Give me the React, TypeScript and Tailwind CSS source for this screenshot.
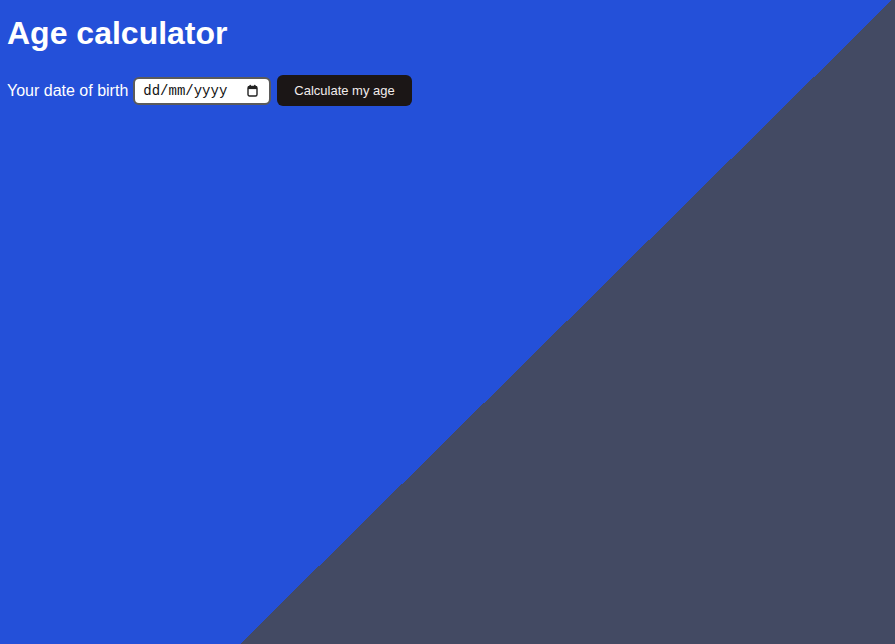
import React from 'react'

const CalendarIcon = () => (
  <svg width="11" height="13" viewBox="0 0 11 13" aria-hidden="true">
    <rect x="1" y="2.5" width="9" height="9.5" rx="1.5" fill="none" stroke="#222" strokeWidth="1.4" />
    <rect x="1" y="2.5" width="9" height="2.6" fill="#222" />
    <rect x="2.6" y="0.8" width="1.3" height="2.4" rx="0.5" fill="#222" />
    <rect x="7.1" y="0.8" width="1.3" height="2.4" rx="0.5" fill="#222" />
  </svg>
)

const App = () => {
  return (
    <div className="min-h-screen w-full bg-[linear-gradient(135.35deg,#2450d9_57.66%,#434a63_57.66%)] px-[7px] pt-[15px] font-['Liberation_Sans',Arial,sans-serif] text-white">
      <h1 className="text-[32px] font-bold leading-[37px]">Age calculator</h1>

      <div className="mt-[23px] flex items-center">
        <label className="text-[16px] leading-[18px]">Your date of birth</label>
        <div className="ml-[5px] flex h-[28px] w-[138px] items-center justify-between rounded-[6px] border-2 border-[#5b5b5b] bg-white pl-[8px] pr-[11px]">
          <span className="font-['Liberation_Mono','Courier_New',monospace] text-[14px] leading-none text-[#111]">dd/mm/yyyy</span>
          <CalendarIcon />
        </div>
        <button className="ml-[6px] h-[31px] rounded-[6px] bg-[#1b1616] px-[17px] text-[13px] text-[#f2ecec]">
          Calculate my age
        </button>
      </div>
    </div>
  )
}

export default App
